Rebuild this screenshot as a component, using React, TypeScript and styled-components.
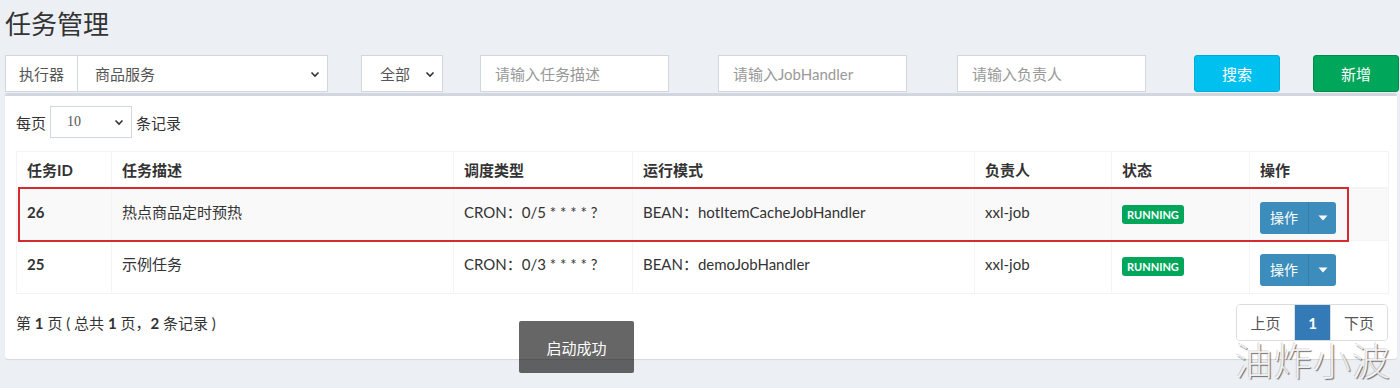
import React from 'react';
import styled, { createGlobalStyle } from 'styled-components';

const FONT = `Lato, "Noto Sans CJK SC", sans-serif`;

const Global = createGlobalStyle`
  html, body { margin: 0; padding: 0; background: #ecf0f5; }
  body { font-family: ${FONT}; color: #333; font-size: 15px; }
  * { box-sizing: border-box; }
`;

const Page = styled.div`
  position: relative;
  width: 1400px;
  height: 388px;
  overflow: hidden;
  padding: 8px 0 0 5px;
`;

const Title = styled.h1`
  margin: 0 0 15px;
  font-size: 26px;
  line-height: 32px;
  font-weight: 400;
  color: #333;
`;

const FilterBar = styled.div`
  display: grid;
  grid-template-columns: 356px 119px 238px 239px 237px 119px 119px;
  height: 37px;
`;

const InputGroup = styled.div`
  display: flex;
  width: 323px;
  height: 37px;
`;

const Addon = styled.div`
  width: 73px;
  display: flex;
  align-items: center;
  justify-content: center;
  background: #fff;
  border: 1px solid #d2d6de;
  color: #555;
  font-size: 15px;
`;

const SelectBox = styled.div<{ $w: number; $h?: number; $pl: number; $joined?: boolean; $serif?: boolean }>`
  width: ${(p) => p.$w}px;
  height: ${(p) => p.$h ?? 37}px;
  display: flex;
  align-items: center;
  justify-content: space-between;
  padding: 0 6px 0 ${(p) => p.$pl}px;
  background: #fff;
  border: 1px solid #d2d6de;
  ${(p) => (p.$joined ? 'border-left: none;' : '')}
  color: #555;
  font-size: ${(p) => (p.$serif ? '14px' : '15px')};
  font-family: ${(p) => (p.$serif ? '"Liberation Serif", serif' : FONT)};
`;

const Input = styled.input`
  width: 189px;
  height: 37px;
  border: 1px solid #d2d6de;
  background: #fff;
  padding: 0 14px;
  font-family: ${FONT};
  font-size: 15px;
  color: #555;
  outline: none;
  &::placeholder { color: #999; }
`;

const Button = styled.button<{ $bg: string; $bd: string }>`
  width: 86px;
  height: 37px;
  border-radius: 3px;
  background: ${(p) => p.$bg};
  border: 1px solid ${(p) => p.$bd};
  color: #fff;
  font-family: ${FONT};
  font-size: 15px;
  padding: 0;
`;

const Box = styled.div`
  margin-top: 1px;
  width: 1392px;
  background: #fff;
  border-top: 3px solid #d2d6de;
  border-radius: 3px;
  box-shadow: 0 1px 1px rgba(0, 0, 0, 0.1);
  padding: 10px 9px 18px 11px;
`;

const LengthRow = styled.div`
  display: flex;
  align-items: center;
  gap: 4px;
  height: 32px;
  font-size: 15px;
  color: #333;
`;

const TableWrap = styled.div`
  position: relative;
  margin-top: 13px;
`;

const Table = styled.table`
  width: 1372px;
  border-collapse: collapse;
  border: 1px solid #f4f4f4;
  table-layout: fixed;
`;

const Th = styled.th`
  height: 36px;
  padding: 0 10px;
  text-align: left;
  font-weight: 700;
  font-size: 15px;
  color: #333;
  border: 1px solid #f4f4f4;
  border-bottom-width: 2px;
`;

const Tr = styled.tr<{ $striped?: boolean }>`
  background: ${(p) => (p.$striped ? '#f9f9f9' : '#fff')};
`;

const Td = styled.td<{ $bold?: boolean }>`
  height: 53px;
  padding: 12px 10px 0;
  border: 1px solid #f4f4f4;
  vertical-align: top;
  font-size: 15px;
  line-height: 22px;
  font-weight: ${(p) => (p.$bold ? 700 : 400)};
  color: #333;
  white-space: nowrap;
`;

const Highlight = styled.div`
  position: absolute;
  left: 2px;
  top: 36px;
  width: 1331px;
  height: 55px;
  border: 2px solid #d42a30;
  pointer-events: none;
`;

const Badge = styled.span`
  display: inline-block;
  margin-top: 4px;
  background: #00a65a;
  color: #fff;
  font-size: 11px;
  font-weight: 700;
  line-height: 13px;
  padding: 3px 5px;
  border-radius: 3px;
`;

const BtnGroup = styled.div`
  display: inline-flex;
  margin-top: 1px;
  height: 32px;
  border-radius: 3px;
  overflow: hidden;
  background: #3c8dbc;
  vertical-align: top;
`;

const BtnMain = styled.div`
  width: 48px;
  display: flex;
  align-items: center;
  justify-content: center;
  color: #fff;
  font-size: 14px;
`;

const BtnCaret = styled.div`
  width: 28px;
  display: flex;
  align-items: center;
  justify-content: center;
  border-left: 1px solid #367fa9;
`;

const Footer = styled.div`
  display: flex;
  justify-content: space-between;
  align-items: center;
  width: 1372px;
  margin-top: 10px;
`;

const Info = styled.div`
  font-size: 15px;
  color: #333;
  b { font-weight: 700; }
`;

const Pager = styled.div`
  display: flex;
  height: 37px;
  border: 1px solid #ddd;
  border-radius: 4px;
  overflow: hidden;
`;

const PageItem = styled.div<{ $w: number; $active?: boolean }>`
  width: ${(p) => p.$w}px;
  display: flex;
  align-items: center;
  justify-content: center;
  font-size: 15px;
  color: ${(p) => (p.$active ? '#fff' : '#555')};
  background: ${(p) => (p.$active ? '#337ab7' : '#fff')};
  font-weight: ${(p) => (p.$active ? 700 : 400)};
  & + & { border-left: 1px solid #ddd; }
`;

const Toast = styled.div`
  position: absolute;
  left: 519px;
  top: 321px;
  width: 115px;
  height: 52px;
  background: rgba(0, 0, 0, 0.6);
  border-radius: 2px;
  color: #fff;
  font-size: 15px;
  display: flex;
  align-items: center;
  justify-content: center;
`;

const Watermark = styled.div`
  position: absolute;
  left: 1235px;
  top: 337px;
  font-size: 38px;
  line-height: 44px;
  color: rgba(255, 255, 255, 0.85);
  text-shadow: 1px 1px 1px rgba(0, 0, 0, 0.55), -1px -1px 0 rgba(0, 0, 0, 0.15);
  font-family: "Noto Sans CJK SC", sans-serif;
  font-weight: 300;
  letter-spacing: 1px;
`;

const Chevron = () => (
  <svg width="12" height="12" viewBox="0 0 12 12">
    <path d="M2.5 4.5 L6 8 L9.5 4.5" fill="none" stroke="#333" strokeWidth="1.6" />
  </svg>
);

const Caret = () => (
  <svg width="10" height="6" viewBox="0 0 10 6">
    <path d="M0.5 0.5 H9.5 L5 5.5 Z" fill="#fff" />
  </svg>
);

const cols = [95, 342, 179, 342, 137, 138, 139];
const headers = ['任务ID', '任务描述', '调度类型', '运行模式', '负责人', '状态', '操作'];
const rows = [
  { id: '26', desc: '热点商品定时预热', cron: 'CRON：0/5 * * * * ?', mode: 'BEAN：hotItemCacheJobHandler' },
  { id: '25', desc: '示例任务', cron: 'CRON：0/3 * * * * ?', mode: 'BEAN：demoJobHandler' },
];

export default function App() {
  return (
    <Page>
      <Global />
      <Title>任务管理</Title>
      <FilterBar>
        <InputGroup>
          <Addon>执行器</Addon>
          <SelectBox $w={250} $pl={17} $joined>
            <span>商品服务</span>
            <Chevron />
          </SelectBox>
        </InputGroup>
        <SelectBox $w={82} $pl={18}>
          <span>全部</span>
          <Chevron />
        </SelectBox>
        <Input placeholder="请输入任务描述" />
        <Input placeholder="请输入JobHandler" />
        <Input placeholder="请输入负责人" />
        <Button $bg="#00c0ef" $bd="#00acd6">搜索</Button>
        <Button $bg="#00a65a" $bd="#008d4c">新增</Button>
      </FilterBar>
      <Box>
        <LengthRow>
          <span>每页</span>
          <SelectBox $w={82} $h={32} $pl={16} $serif>
            <span>10</span>
            <Chevron />
          </SelectBox>
          <span>条记录</span>
        </LengthRow>
        <TableWrap>
          <Table>
            <colgroup>
              {cols.map((w, i) => (
                <col key={i} style={{ width: w }} />
              ))}
            </colgroup>
            <thead>
              <tr>
                {headers.map((h) => (
                  <Th key={h}>{h}</Th>
                ))}
              </tr>
            </thead>
            <tbody>
              {rows.map((r, i) => (
                <Tr key={r.id} $striped={i === 0}>
                  <Td $bold>{r.id}</Td>
                  <Td>{r.desc}</Td>
                  <Td>{r.cron}</Td>
                  <Td>{r.mode}</Td>
                  <Td>xxl-job</Td>
                  <Td>
                    <Badge>RUNNING</Badge>
                  </Td>
                  <Td>
                    <BtnGroup>
                      <BtnMain>操作</BtnMain>
                      <BtnCaret>
                        <Caret />
                      </BtnCaret>
                    </BtnGroup>
                  </Td>
                </Tr>
              ))}
            </tbody>
          </Table>
          <Highlight />
        </TableWrap>
        <Footer>
          <Info>
            第 <b>1</b> 页 ( 总共 <b>1</b> 页，<b>2</b> 条记录 )
          </Info>
          <Pager>
            <PageItem $w={57}>上页</PageItem>
            <PageItem $w={36} $active>1</PageItem>
            <PageItem $w={57}>下页</PageItem>
          </Pager>
        </Footer>
      </Box>
      <Toast>启动成功</Toast>
      <Watermark>油炸小波</Watermark>
    </Page>
  );
}
